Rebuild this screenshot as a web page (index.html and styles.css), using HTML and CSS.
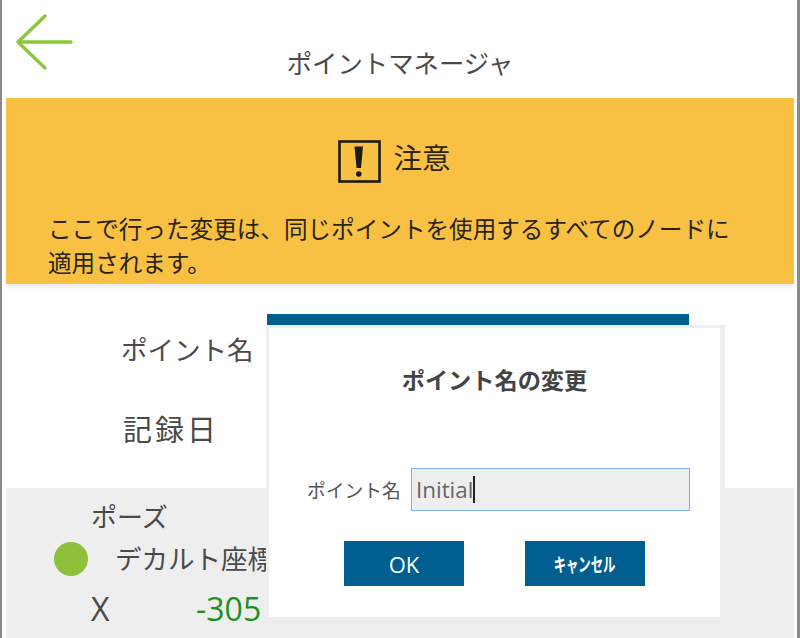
FILE: index.html
```html
<!DOCTYPE html>
<html lang="ja">
<head>
<meta charset="utf-8">
<title>ポイントマネージャ</title>
<link rel="stylesheet" href="styles.css">
</head>
<body>
<div class="screen">
  <header class="header">
    <svg class="back" width="64" height="64" viewBox="0 0 64 64" aria-hidden="true"><path d="M35 6 L8 32 L35 58 M8 32 H61" fill="none" stroke="#8cc63f" stroke-width="3.4" stroke-linecap="round" stroke-linejoin="round"/></svg>
    <h1 class="title">ポイントマネージャ</h1>
  </header>
  <section class="banner">
    <div class="banner-head">
      <svg class="warn" width="43" height="43" viewBox="0 0 43 43" aria-hidden="true"><rect x="1.5" y="1.5" width="40" height="40" fill="none" stroke="#1c1a12" stroke-width="2.6"/><path d="M16.5 6.5 H25 L23 28 H18.5 Z" fill="#1c1a12"/><circle cx="20.8" cy="34" r="2.8" fill="#1c1a12"/></svg>
      <span class="banner-title">注意</span>
    </div>
    <p class="banner-text">ここで行った変更は、同じポイントを使用するすべてのノードに<br>適用されます。</p>
  </section>
  <section class="form">
    <div class="form-row">
      <span class="form-label">ポイント名</span>
      <div class="field"></div>
    </div>
    <div class="form-row">
      <span class="form-label form-label-kanji">記録日</span>
    </div>
  </section>
  <section class="pose">
    <div class="pose-title">ポーズ</div>
    <div class="pose-frame"><span class="dot"></span><span>デカルト座標</span></div>
    <div class="pose-values"><span class="axis">X</span><span class="value">-305</span></div>
  </section>
  <div class="dialog" role="dialog">
    <h2 class="dialog-title">ポイント名の変更</h2>
    <div class="dialog-row">
      <span class="dialog-label">ポイント名</span>
      <div class="input"><span>Initial</span><span class="caret"></span></div>
    </div>
    <div class="dialog-actions">
      <button class="btn btn-ok">OK</button>
      <button class="btn btn-cancel"><span class="btn-cancel-text">キャンセル</span></button>
    </div>
  </div>
</div>
</body>
</html>
```
FILE: styles.css
```css
* { box-sizing: border-box; }
html, body { margin: 0; padding: 0; }
body {
  width: 800px;
  height: 638px;
  overflow: hidden;
  background: #fff;
  font-family: "Open Sans", "Noto Sans CJK JP", sans-serif;
  color: #444;
}
.screen {
  position: relative;
  width: 800px;
  height: 638px;
  overflow: hidden;
  border-left: 2px solid #8a8a8a;
  border-right: 3px solid #8a8a8a;
  padding-left: 4px;
  padding-right: 3px;
  display: flex;
  flex-direction: column;
}
.header { height: 98px; position: relative; display: flex; justify-content: center; }
.back { position: absolute; left: 4px; top: 10px; }
.title {
  margin: 42px 0 0;
  font-size: 25.4px;
  line-height: 42px;
  font-weight: 400;
  color: #4a4a4a;
  white-space: nowrap;
}
.banner {
  height: 186px;
  background: #f8c143;
  box-shadow: 0 5px 2px -1px #eeeeee;
  padding: 33px 0 0 42px;
  color: #2a2413;
}
.banner-head { display: flex; align-items: center; justify-content: center; gap: 12px; margin-left: -53px; height: 54px; }
.warn { flex: none; margin-top: 6px; }
.banner-title { font-size: 28.5px; line-height: 40px; }
.banner-text { margin: 27px 0 0; font-size: 23.6px; line-height: 34px; white-space: nowrap; }
.form { height: 204px; padding-top: 30px; }
.form-row { display: flex; height: 78px; padding-left: 115px; gap: 14px; }
.form-label { font-size: 26.5px; line-height: 72px; height: 72px; color: #4a4a4a; white-space: nowrap; width: 132px; }
.form-label-kanji { font-size: 29px; letter-spacing: 3px; line-height: 76px; height: 76px; padding-left: 2px; }
.field { width: 422px; height: 40px; background: #005f90; }
.pose { flex: 1; background: #eeeeee; padding: 7px 0 0 85px; color: #4a4a4a; }
.pose-title { font-size: 26px; line-height: 44px; }
.pose-frame { display: flex; align-items: center; gap: 27px; font-size: 26.5px; line-height: 40px; margin-left: -37px; white-space: nowrap; }
.dot { width: 34px; height: 34px; border-radius: 50%; background: #8fc03c; flex: none; }
.pose-values { display: flex; font-size: 32px; line-height: 44px; margin-top: 8px; }
.axis { width: 105px; }
.value { color: #1d9120; }
.dialog {
  position: absolute;
  left: 264px;
  top: 325px;
  width: 459px;
  height: 296px;
  background: #fff;
  border: 3px solid #eeeeee;
  border-right-width: 5px;
  border-bottom-width: 4px;
  display: flex;
  flex-direction: column;
  align-items: center;
}
.dialog-title { margin: 34px 0 0; font-size: 23.2px; line-height: 36px; font-weight: 700; color: #444; }
.dialog-row { display: flex; align-items: center; margin-top: 70px; align-self: flex-start; padding-left: 38px; gap: 11px; }
.dialog-label { font-size: 18.8px; white-space: nowrap; color: #555; width: 93px; }
.input {
  width: 279px;
  height: 43px;
  background: #eeeeee;
  border: 1px solid #7db2ee;
  display: flex;
  align-items: center;
  padding-left: 4px;
  font-size: 22.4px;
  color: #666;
}
.caret { width: 1.5px; height: 27px; background: #222; }
.dialog-actions { display: flex; gap: 61px; margin-top: 30px; align-self: flex-start; padding-left: 75px; }
.btn { width: 120px; height: 45px; border: 0; background: #005f90; color: #fff; padding: 0; font-family: inherit; }
.btn-ok { font-size: 22px; }
.btn-cancel { font-size: 19px; font-weight: 700; }
.btn-cancel-text { display: inline-block; transform: scaleX(0.65); white-space: nowrap; }
```
